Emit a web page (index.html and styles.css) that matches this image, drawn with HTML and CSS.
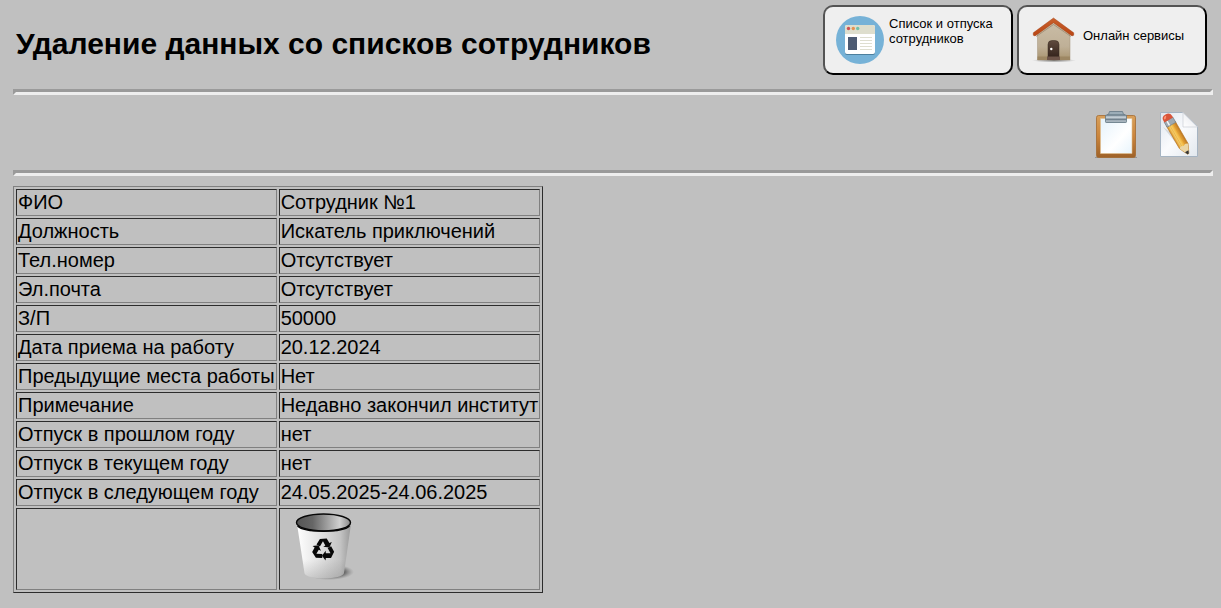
FILE: index.html
```html
<!DOCTYPE html>
<html lang="ru">
<head>
<meta charset="utf-8">
<meta name="viewport" content="width=device-width, initial-scale=1">
<title>Удаление данных со списков сотрудников</title>
<link rel="stylesheet" href="styles.css">
</head>
<body>
<header class="header">
  <h1 class="title">Удаление данных со списков сотрудников</h1>
  <nav class="nav">
    <button class="nav-button" type="button">
      <svg class="nav-icon" viewBox="0 0 48 48" aria-hidden="true">
        <circle cx="24" cy="24" r="24" fill="#76b2d7"/>
        <rect x="9" y="10" width="30" height="29" rx="2" fill="#4c7f9d"/>
        <rect x="9" y="9" width="30" height="29" rx="2" fill="#fff"/>
        <path d="M9 18v-7a2 2 0 0 1 2-2h26a2 2 0 0 1 2 2v7z" fill="#dedecd"/>
        <circle cx="12.500" cy="12.500" r="1.700" fill="#cd5053"/>
        <circle cx="17.300" cy="12.500" r="1.700" fill="#e59151"/>
        <circle cx="21.700" cy="12.500" r="1.700" fill="#70c0ab"/>
        <path d="M12 21h9v13h-9z" fill="#4d5b73"/>
        <path d="M24 21.500h12M24 24.500h12M24 27.500h12M24 30.500h12M24 33.500h12" stroke="#deded0" stroke-width="1.200"/>
      </svg>
      <span class="nav-label nav-label-top">Список и отпуска сотрудников</span>
    </button>
    <button class="nav-button" type="button">
      <svg class="nav-icon" viewBox="0 0 48 48" aria-hidden="true">
        <defs>
          <linearGradient id="wall" x2="0" y2="1"><stop stop-color="#cabda7"/><stop offset=".65" stop-color="#bfb097"/><stop offset="1" stop-color="#a9946f"/></linearGradient>
          <linearGradient id="roof" x2="0" y2="1"><stop stop-color="#c9602c"/><stop offset="1" stop-color="#b94514"/></linearGradient>
          <linearGradient id="door" x2="0" y2="1"><stop stop-color="#5f4a3e"/><stop offset="1" stop-color="#35241c"/></linearGradient>
          <radialGradient id="ground"><stop stop-color="#555" stop-opacity=".8"/><stop offset="1" stop-color="#777" stop-opacity="0"/></radialGradient>
        </defs>
        <ellipse cx="24" cy="44.500" rx="22" ry="2" fill="url(#ground)"/>
        <path d="M7.500 17 23.500 5l16.500 12v27H7.500z" fill="url(#wall)" stroke="#a3937b" stroke-width=".5"/>
        <path d="M7.500 40.500H40V44H7.500z" fill="#9d8763"/>
        <path d="M18 41V28.500q0-4 4-4h3q4 0 4 4V41z" fill="url(#door)" stroke="#362a21" stroke-width=".5"/>
        <path d="M17 40.500h13V44H17z" fill="#6d5448"/>
        <path d="M6 20.500 23.500 8.500 41 20.500" fill="none" stroke="#8d7a61" stroke-opacity=".6"/>
        <path d="M3.300 16.800 23.500 2l20.200 14.800v2.400l-1.700.7L23.500 6.700 5 19.900l-1.700-.7z" fill="url(#roof)" stroke="#a54317" stroke-width=".5"/>
        <circle cx="21.300" cy="33" r="1.200" fill="#fff"/>
      </svg>
      <span class="nav-label">Онлайн сервисы</span>
    </button>
  </nav>
</header>
<hr class="rule">
<div class="toolbar">
  <button class="tool" type="button" aria-label="Список">
    <svg class="tool-icon" viewBox="0 0 50 50" aria-hidden="true">
      <defs>
        <linearGradient id="board" x2="0" y2="1"><stop stop-color="#d8a05b"/><stop offset=".5" stop-color="#cb853c"/><stop offset="1" stop-color="#9e6229"/></linearGradient>
        <linearGradient id="clip" x2="0" y2="1"><stop stop-color="#7d8d99"/><stop offset=".3" stop-color="#ccd6dd"/><stop offset=".6" stop-color="#71818d"/><stop offset=".8" stop-color="#b8c3cb"/><stop offset="1" stop-color="#8797a2"/></linearGradient>
        <linearGradient id="sheet" x2="1" y2="1"><stop stop-color="#e5f2fb"/><stop offset=".6" stop-color="#fff"/><stop offset="1" stop-color="#e7f4fc"/></linearGradient>
      </defs>
      <path d="M4 48.500h42" stroke="#777" stroke-opacity=".6"/>
      <rect x="5.500" y="6.500" width="39" height="42" rx="2" fill="url(#board)" stroke="#a56b31" stroke-width=".8"/>
      <path d="M9.500 9.500h31.500v35H9.500z" fill="url(#sheet)" stroke="#e0bf8e" stroke-width=".6"/>
      <path d="M16 6q2 0 2.500-3.500h13Q32 6 34 6z" fill="#9cadb8" stroke="#657986" stroke-width=".8"/>
      <rect x="14.500" y="6" width="21" height="7.500" rx=".7" fill="url(#clip)" stroke="#637783" stroke-width=".8"/>
    </svg>
  </button>
  <button class="tool" type="button" aria-label="Редактировать">
    <svg class="tool-icon" viewBox="0 0 50 50" aria-hidden="true">
      <defs>
        <linearGradient id="page" x2="1" y2="1"><stop stop-color="#dfe6ee"/><stop offset=".5" stop-color="#fafbfd"/><stop offset="1" stop-color="#e2e8ee"/></linearGradient>
        <linearGradient id="wood"><stop stop-color="#d98f28"/><stop offset=".3" stop-color="#fbd873"/><stop offset=".6" stop-color="#efb13d"/><stop offset="1" stop-color="#bc7420"/></linearGradient>
        <linearGradient id="fold" x1="0" y1="1" x2="1" y2="0"><stop stop-color="#fff"/><stop offset=".5" stop-color="#f1f2f5"/><stop offset="1" stop-color="#bcc1c8"/></linearGradient>
      </defs>
      <path d="M7.500 3.500h22l15 14v30h-37z" fill="url(#page)" stroke="#a6b4c2"/>
      <path d="M10 18l20 25 5 2-7-14z" fill="#9da3aa" opacity=".35"/>
      <path d="M30 3.500v14.500h14.500z" fill="url(#fold)" stroke="#c8cdd4" stroke-width=".7"/>
      <g transform="translate(14.700 9.300) rotate(-30)">
        <path d="M-5 6H5v26L.8 41h-1.600L-5 32z" fill="url(#wood)" stroke="#b57624" stroke-width=".6"/>
        <path d="M-1.800 6v26M2 6v26" stroke="#d59635" stroke-opacity=".6" stroke-width=".8"/>
        <path d="M-4.800 32q2.400-2 4.800 0 2.400-2 4.800 0L.8 41h-1.600z" fill="#ead5a5"/>
        <path d="M-2 38h4L.8 41h-1.600z" fill="#343437"/>
        <rect x="-5" y="1.500" width="10" height="6" fill="#9fa9b1" stroke="#77858e" stroke-width=".7"/>
        <path d="M-2 2v5" stroke="#f4f6f7" stroke-width="1.500"/>
        <path d="M-5 2V0q0-4.500 5-4.500T5 0v2z" fill="#d9553a"/>
        <path d="M-2.800-.5q.3-2 2.300-2" fill="none" stroke="#ff9a7c" stroke-width="1.500"/>
      </g>
    </svg>
  </button>
</div>
<hr class="rule">
<main>
  <table class="card">
    <tbody>
      <tr><td>ФИО</td><td>Сотрудник №1</td></tr>
      <tr><td>Должность</td><td>Искатель приключений</td></tr>
      <tr><td>Тел.номер</td><td>Отсутствует</td></tr>
      <tr><td>Эл.почта</td><td>Отсутствует</td></tr>
      <tr><td>З/П</td><td>50000</td></tr>
      <tr><td>Дата приема на работу</td><td>20.12.2024</td></tr>
      <tr><td>Предыдущие места работы</td><td>Нет</td></tr>
      <tr><td>Примечание</td><td>Недавно закончил институт</td></tr>
      <tr><td>Отпуск в прошлом году</td><td>нет</td></tr>
      <tr><td>Отпуск в текущем году</td><td>нет</td></tr>
      <tr><td>Отпуск в следующем году</td><td>24.05.2025-24.06.2025</td></tr>
      <tr><td></td><td>
        <button class="delete" type="button" aria-label="Удалить">
          <svg class="delete-icon" viewBox="0 0 84 78" aria-hidden="true">
            <defs>
              <linearGradient id="bin"><stop stop-color="#fff"/><stop offset=".4" stop-color="#e3e3e3"/><stop offset=".8" stop-color="#c4c4c4"/><stop offset="1" stop-color="#999"/></linearGradient>
              <linearGradient id="binshade" x2="0" y2="1"><stop offset=".65" stop-color="#777" stop-opacity="0"/><stop offset="1" stop-color="#777" stop-opacity=".3"/></linearGradient>
              <linearGradient id="inside"><stop stop-color="#555"/><stop offset=".3" stop-color="#666"/><stop offset=".8" stop-color="#d0d0d0"/><stop offset="1" stop-color="#888"/></linearGradient>
              <radialGradient id="binground"><stop stop-color="#222" stop-opacity=".9"/><stop offset=".6" stop-color="#333" stop-opacity=".7"/><stop offset="1" stop-color="#777" stop-opacity="0"/></radialGradient>
            </defs>
            <ellipse cx="48" cy="62" rx="25" ry="8" fill="url(#binground)"/>
            <path d="M16 14l7.500 49c1 7 38.500 7 39.500 0l7-49z" fill="url(#bin)"/>
            <path d="M16 14l7.500 49c1 7 38.500 7 39.500 0l7-49z" fill="url(#binshade)"/>
            <ellipse cx="42.500" cy="12.500" rx="27" ry="8.500" fill="url(#inside)" stroke="#080808" stroke-width="1.400"/>
            <path d="M16.500 16c7 7 45 7 52 0" fill="none" stroke="#050505" stroke-width="1.300"/>
            <g fill="#080808" transform="translate(42.300 39.500) scale(.34)">
              <path id="arrow" d="M-20-15-10-31 10-32 18-19 25-22 18-6 0-8 6-12-1-24-10-9z"/>
              <use href="#arrow" transform="rotate(120)"/>
              <use href="#arrow" transform="rotate(240)"/>
            </g>
          </svg>
        </button>
      </td></tr>
    </tbody>
  </table>
</main>
</body>
</html>
```
FILE: styles.css
```css
body {
  margin: 5px 8px 8px 13px;
  background: #c0c0c0;
  color: #000;
  font: 20px/23px "Liberation Sans", Arial, sans-serif;
}

.header {
  display: flex;
  justify-content: space-between;
  align-items: flex-start;
}

.title {
  margin: 21px 0 0 3px;
  font-size: 30px;
  line-height: 35px;
}

.nav {
  display: flex;
  gap: 4px;
  margin-right: 6px;
}

.nav-button {
  display: flex;
  align-items: center;
  gap: 5px;
  box-sizing: border-box;
  width: 190px;
  height: 70px;
  padding: 0 11px;
  border: 2px outset #000;
  border-radius: 10px;
  background: #efefef;
  color: #000;
  font: 13px/15px "Liberation Sans", Arial, sans-serif;
  text-align: left;
}

.nav-icon {
  flex: none;
  width: 48px;
  height: 48px;
}

.nav-label {
  padding-bottom: 10px;
}

.nav-label-top {
  padding-bottom: 18px;
}

.rule {
  margin: 14px 0 0;
  border: 3px inset #eee;
}

.toolbar {
  display: flex;
  justify-content: flex-end;
  gap: 12px;
  margin: 14px 10px 0 0;
}

.tool,
.delete {
  display: block;
  padding: 0;
  border: 0;
  background: none;
}

.tool-icon {
  display: block;
  width: 50px;
  height: 50px;
}

.toolbar + .rule {
  margin-top: 11px;
}

.card {
  margin-top: 10px;
  border: 1px solid;
  border-color: #808080 #2c2c2c #2c2c2c #808080;
  border-spacing: 2px;
}

.card td {
  height: 23px;
  padding: 1px;
  border: 1px solid;
  border-color: #2c2c2c #808080 #808080 #2c2c2c;
}

.delete-icon {
  display: block;
  width: 84px;
  height: 78px;
}
```
